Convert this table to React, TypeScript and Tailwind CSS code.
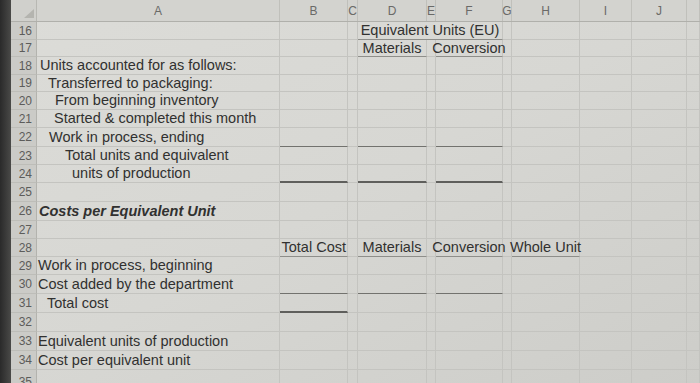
import React from "react";

type Cell = { t?: string; u?: string; al?: string };
type RowDef = {
  n: number;
  h: string;
  a?: string;
  pl?: string;
  bi?: boolean;
  merge?: { t: string; u: string };
  cells?: Record<string, Cell>;
};

const cols = [
  { k: "A", w: "w-[243px]" },
  { k: "B", w: "w-[68px]" },
  { k: "C", w: "w-[10px]" },
  { k: "D", w: "w-[69px]" },
  { k: "E", w: "w-[9px]" },
  { k: "F", w: "w-[67px]" },
  { k: "G", w: "w-[9px]" },
  { k: "H", w: "w-[68px]" },
  { k: "I", w: "w-[52px]" },
  { k: "J", w: "w-[55px]" },
  { k: "", w: "flex-1" },
];

const U1 = "border-b border-b-[#8e8e8a]";
const U2 = "border-b-[1.5px] border-b-[#72726e]";
const U3 = "border-b-2 border-b-[#5f5f5c]";
const GB = "border-b border-b-[#c4c4c0]";

const rows: RowDef[] = [
  { n: 16, h: "h-[18px]", merge: { t: "Equivalent Units (EU)", u: U1 } },
  {
    n: 17,
    h: "h-[17px]",
    cells: { D: { t: "Materials", u: U1, al: "c" }, F: { t: "Conversion", u: U1, al: "c" } },
  },
  { n: 18, h: "h-[18px]", a: "Units accounted for as follows:", pl: "pl-[3px]" },
  { n: 19, h: "h-[17px]", a: "Transferred to packaging:", pl: "pl-[11px]" },
  { n: 20, h: "h-[18px]", a: "From beginning inventory", pl: "pl-[18px]" },
  { n: 21, h: "h-[18px]", a: "Started & completed this month", pl: "pl-[17px]" },
  {
    n: 22,
    h: "h-[19px]",
    a: "Work in process, ending",
    pl: "pl-[12px]",
    cells: { B: { u: U2 }, D: { u: U2 }, F: { u: U2 } },
  },
  { n: 23, h: "h-[18px]", a: "Total units and equivalent", pl: "pl-[28px]" },
  {
    n: 24,
    h: "h-[18px]",
    a: "units of production",
    pl: "pl-[35px]",
    cells: { B: { u: U3 }, D: { u: U3 }, F: { u: U3 } },
  },
  { n: 25, h: "h-[19px]" },
  { n: 26, h: "h-[19px]", a: "Costs per Equivalent Unit", pl: "pl-[2px]", bi: true },
  { n: 27, h: "h-[18px]" },
  {
    n: 28,
    h: "h-[18px]",
    cells: {
      B: { t: "Total Cost", u: U1, al: "r" },
      D: { t: "Materials", u: U1, al: "c" },
      F: { t: "Conversion", u: U1, al: "c" },
      H: { t: "Whole Unit", u: U1, al: "c" },
    },
  },
  { n: 29, h: "h-[18px]", a: "Work in process, beginning", pl: "pl-[1px]" },
  {
    n: 30,
    h: "h-[19px]",
    a: "Cost added by the department",
    pl: "pl-[1px]",
    cells: { B: { u: U2 }, D: { u: U2 }, F: { u: U2 } },
  },
  { n: 31, h: "h-[19px]", a: "Total cost", pl: "pl-[10px]", cells: { B: { u: U3 } } },
  { n: 32, h: "h-[19px]" },
  { n: 33, h: "h-[19px]", a: "Equivalent units of production", pl: "pl-[1px]" },
  { n: 34, h: "h-[19px]", a: "Cost per equivalent unit", pl: "pl-[1px]" },
  { n: 35, h: "h-[19px]" },
];

function alignClass(al?: string) {
  if (al === "c") return "justify-center";
  if (al === "r") return "justify-end pr-[1px]";
  return "justify-start pl-[3px]";
}

function Row({ r }: { r: RowDef }) {
  const out: React.ReactNode[] = [];
  for (let i = 0; i < cols.length; i++) {
    const c = cols[i];
    if (r.merge && c.k === "D") {
      out.push(
        <div
          key="merge"
          className={`w-[145px] shrink-0 h-full flex items-center justify-center whitespace-nowrap border-r border-r-[#c4c4c0] ${r.merge.u}`}
        >
          {r.merge.t}
        </div>
      );
      i += 2;
      continue;
    }
    if (c.k === "A") {
      out.push(
        <div
          key="A"
          className={`${c.w} shrink-0 h-full flex items-center whitespace-nowrap border-r border-r-[#c4c4c0] ${GB} ${r.pl ?? ""} ${
            r.bi ? "font-bold italic" : ""
          }`}
        >
          {r.a ?? ""}
        </div>
      );
      continue;
    }
    const cell = r.cells?.[c.k];
    out.push(
      <div
        key={c.k || "K"}
        className={`${c.w} shrink-0 h-full flex items-center whitespace-nowrap border-r border-r-[#c4c4c0] ${
          cell?.u ?? GB
        } ${alignClass(cell?.al)}`}
      >
        {cell?.t ?? ""}
      </div>
    );
  }
  return (
    <div className={`flex ${r.h} shrink-0`}>
      <div
        className={`w-[26px] shrink-0 h-full flex justify-end pr-[4px] bg-[#cbcbc7] border-r border-r-[#b3b3ae] border-b border-b-[#bdbdb8] text-[12px] text-[#5c5c5a] ${
          r.n === 35 ? "items-start pt-[6px]" : "items-center"
        }`}
      >
        {r.n}
      </div>
      {out}
    </div>
  );
}

export default function App() {
  return (
    <div className="w-[700px] h-[383px] overflow-hidden flex bg-[#d6d6d2] font-['Liberation_Sans',Arial,sans-serif] text-[14.5px] leading-none text-[#313130]">
      <div className="w-[11px] shrink-0 h-full bg-gradient-to-r from-[#2a2a2a] to-[#4a4a48]" />
      <div className="flex-1 flex flex-col bg-gradient-to-br from-[#dcdcd8] via-[#d7d7d3] to-[#cdcdc9]">
        <div className="flex h-[22px] shrink-0 border-b border-b-[#b0b0ab] text-[12px] text-[#6a6a68]">
          <div className="w-[26px] shrink-0 h-full relative bg-[#d0d0cc] border-r border-r-[#b8b8b3]">
            <svg className="absolute right-[2px] bottom-[3px]" width="10" height="9" viewBox="0 0 10 9">
              <polygon points="10,0 10,9 0,9" fill="#b4b4af" />
            </svg>
          </div>
          {cols.map((c) => (
            <div
              key={c.k || "K"}
              className={`${c.w} shrink-0 h-full flex items-center justify-center border-r border-r-[#c0c0bb] bg-[#d3d3cf]`}
            >
              {c.k}
            </div>
          ))}
        </div>
        {rows.map((r) => (
          <Row key={r.n} r={r} />
        ))}
      </div>
    </div>
  );
}
